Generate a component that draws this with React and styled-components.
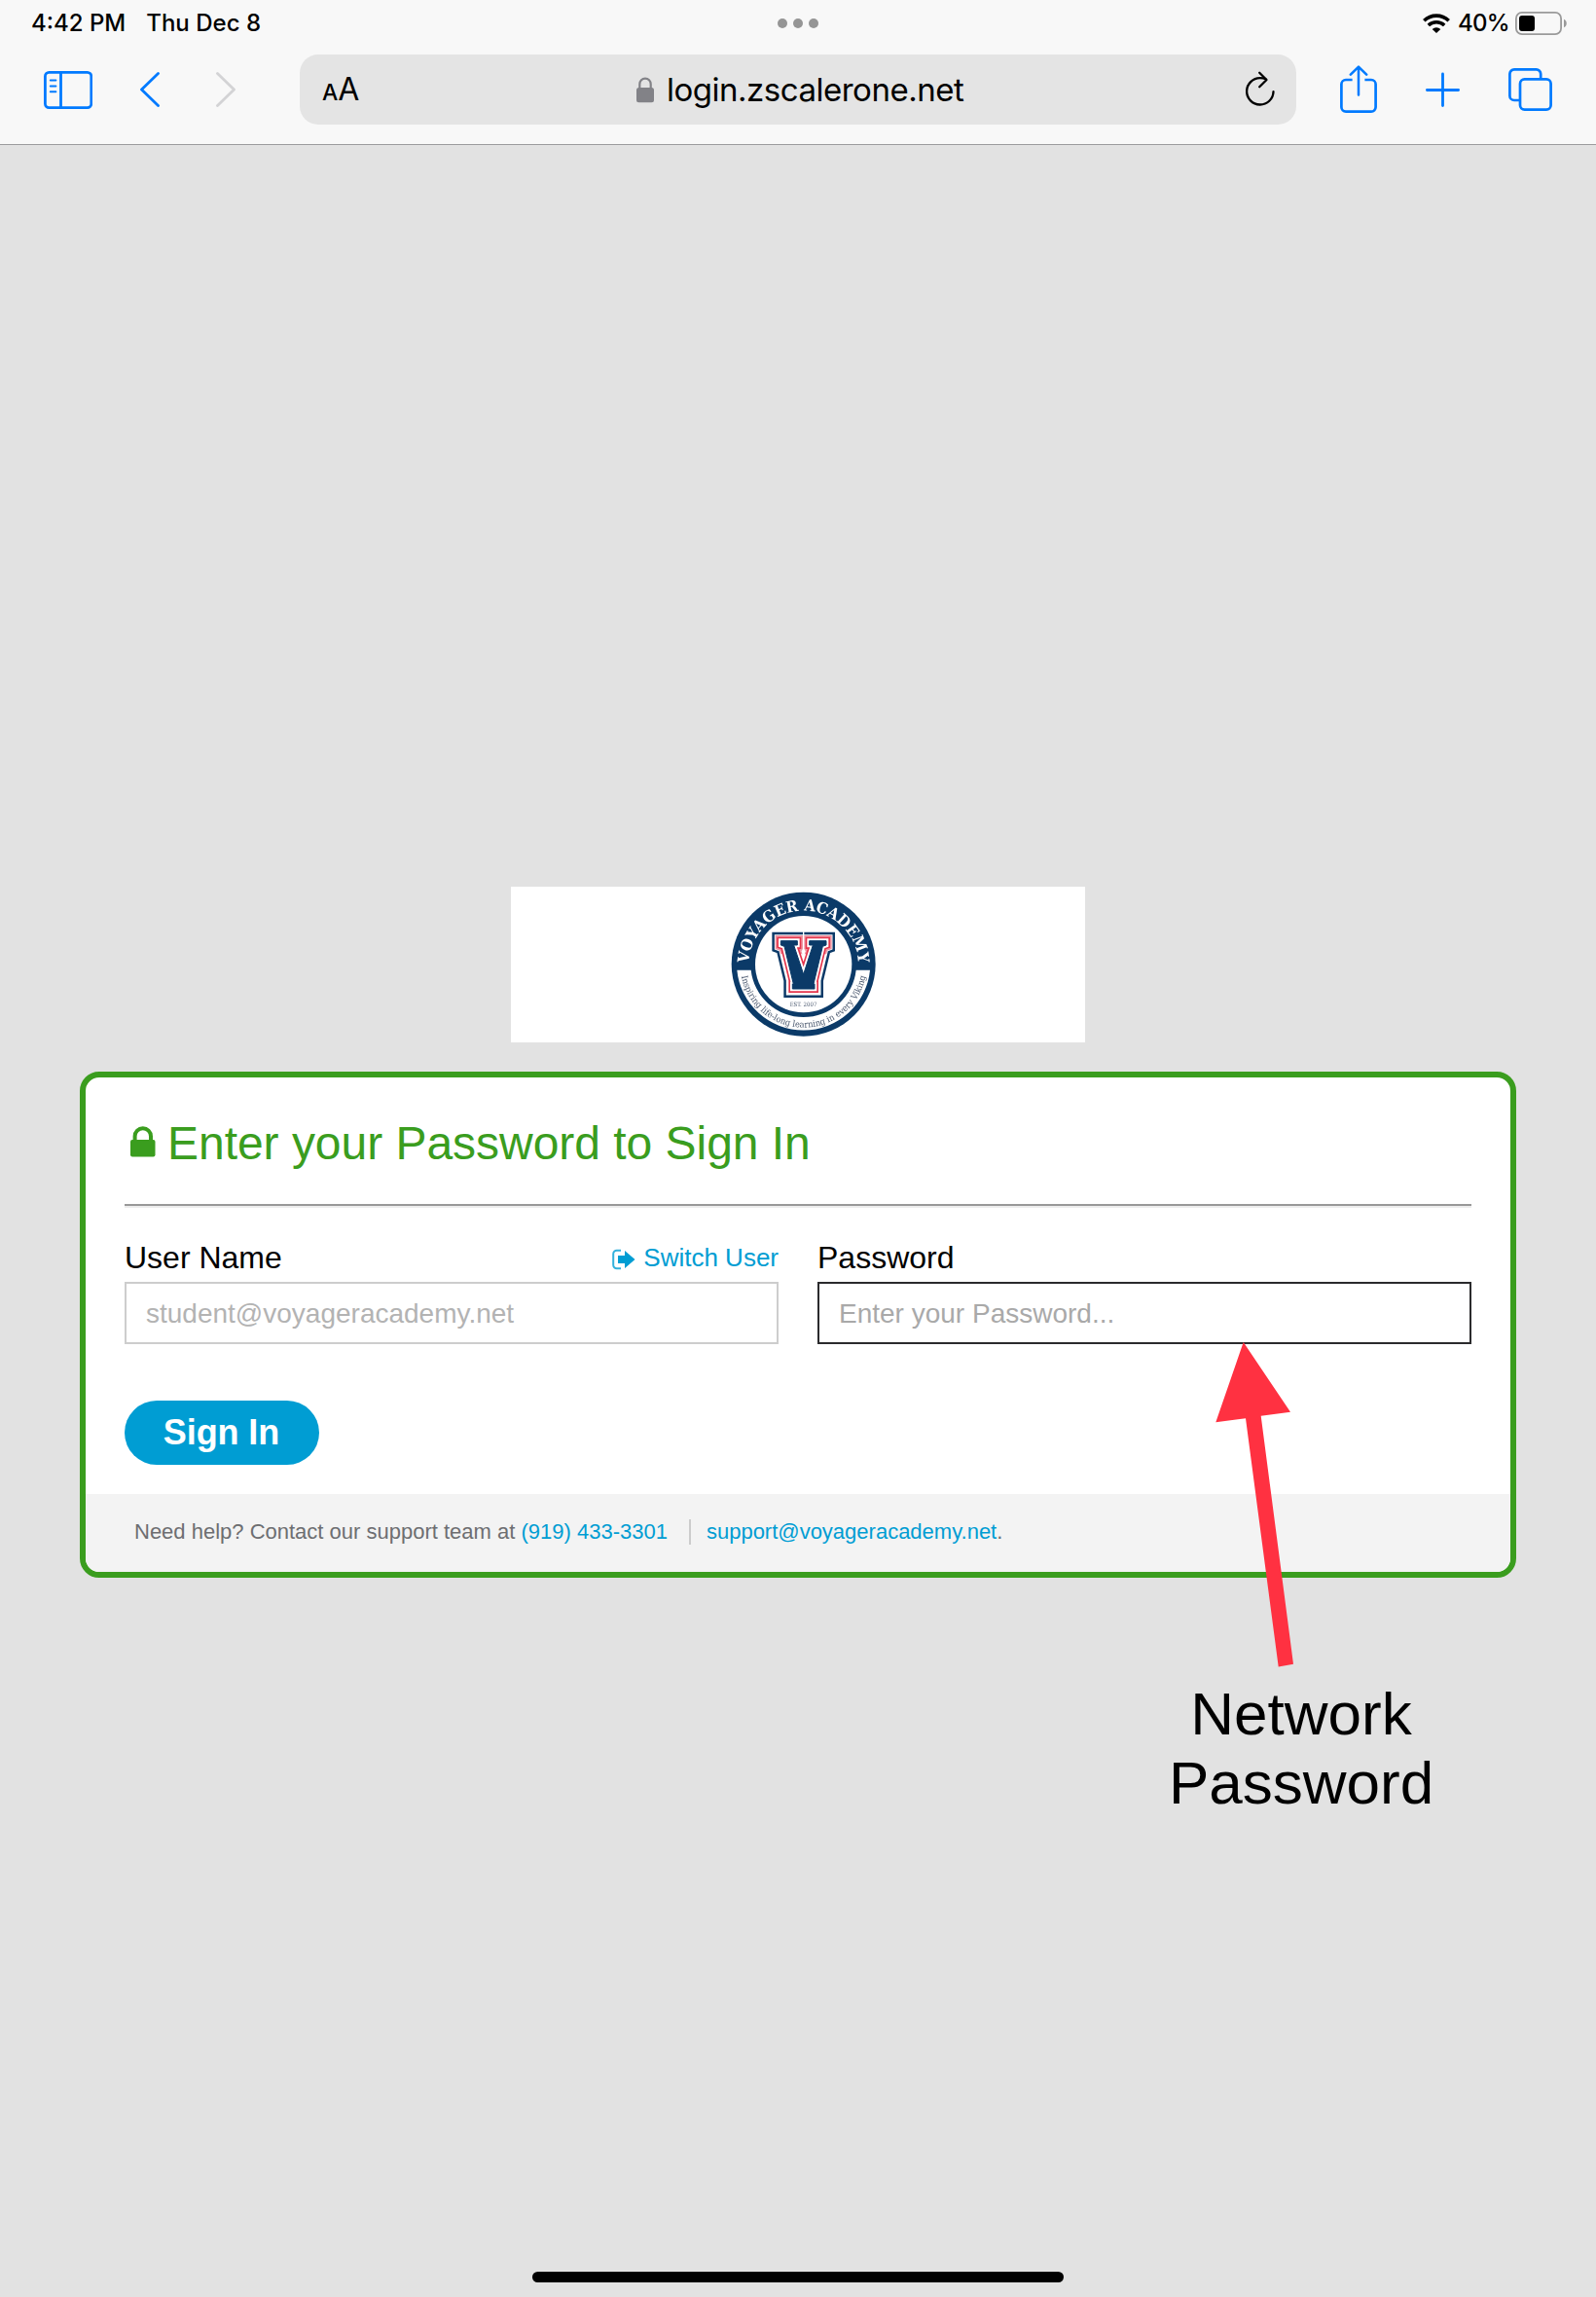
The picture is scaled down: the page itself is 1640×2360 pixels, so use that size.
import React from "react";
import styled, { createGlobalStyle } from "styled-components";

const SANS = '"Liberation Sans", Arial, Helvetica, sans-serif';
const SYSTEM = 'Inter, "Liberation Sans", sans-serif';
const GREEN = "#3a9d1e";
const BLUE = "#009dd3";
const IOS_BLUE = "#007aff";

const GlobalStyle = createGlobalStyle`
  *, *::before, *::after { box-sizing: border-box; }
  html, body { margin: 0; padding: 0; background: #e2e2e2; }
  svg { display: block; flex: none; }
`;

const Screen = styled.div`
  position: relative;
  display: flex;
  flex-direction: column;
  align-items: center;
  width: 1640px;
  height: 2360px;
  overflow: hidden;
  background: #e2e2e2;
  font-family: ${SANS};
`;

const Chrome = styled.header`
  width: 100%;
  height: 149px;
  flex: none;
  background: #f8f8f8;
  border-bottom: 1px solid #9b9b9d;
  font-family: ${SYSTEM};
  color: #000;
`;

const StatusBar = styled.div`
  display: grid;
  grid-template-columns: 1fr auto 1fr;
  align-items: center;
  height: 48px;
  padding: 0 30px;
`;

const StatusGroup = styled.div`
  display: flex;
  align-items: center;
  justify-content: ${(p) => p.$align || "flex-start"};
  padding-left: ${(p) => p.$inset || 0}px;
`;

const StatusText = styled.span`
  font-size: 24px;
  line-height: 30px;
  font-weight: 500;
  white-space: nowrap;
  letter-spacing: ${(p) => p.$spacing || "0"};
  margin-left: ${(p) => p.$left || "0"};
  margin-right: ${(p) => p.$right || "0"};
`;

const Dots = styled.div`
  display: flex;
  gap: 6px;
`;

const Dot = styled.i`
  width: 10px;
  height: 10px;
  border-radius: 50%;
  background: #959595;
`;

const Toolbar = styled.div`
  display: flex;
  align-items: center;
  height: 72px;
  margin-top: 8px;
  padding: 0 45px;
`;

const ToolButton = styled.span`
  display: flex;
  flex: none;
  margin-left: ${(p) => p.$gap || 0}px;
  color: ${(p) => (p.$disabled ? "#d3d3d5" : IOS_BLUE)};
`;

const AddressBar = styled.div`
  display: flex;
  align-items: center;
  width: 1024px;
  height: 72px;
  margin-left: 66px;
  padding: 0 22px 0 23px;
  border-radius: 19px;
  background: #e4e4e4;
`;

const TextSize = styled.span`
  width: 40px;
  flex: none;
  padding-top: 3px;
  white-space: nowrap;
  line-height: 42px;
  font-size: 32px;
  letter-spacing: -1px;
  font-weight: 400;
  small { font-size: 23px; margin-right: 1px; font-weight: 500; }
`;

const Site = styled.div`
  display: flex;
  align-items: center;
  gap: 13px;
  margin-left: 283px;
`;

const Host = styled.span`
  font-size: 33px;
  line-height: 42px;
  letter-spacing: -0.49px;
  white-space: nowrap;
`;

const Reload = styled.span`
  margin-left: auto;
`;

const Banner = styled.div`
  display: flex;
  width: 590px;
  height: 160px;
  flex: none;
  margin-top: 762px;
  padding-left: 205px;
  background: #fff;
`;

const Card = styled.main`
  width: 1476px;
  height: 520px;
  flex: none;
  margin-top: 30px;
  border: 6px solid ${GREEN};
  border-radius: 20px;
  background: #fff;
  overflow: hidden;
`;

const CardBody = styled.div`
  height: 428px;
  padding: 38px 40px 0;
`;

const Title = styled.h1`
  display: flex;
  align-items: center;
  gap: 12px;
  height: 60px;
  margin: 0;
  padding-left: 6px;
  font-size: 48px;
  line-height: 60px;
  font-weight: 400;
  letter-spacing: -0.03px;
  color: ${GREEN};
  white-space: nowrap;
  svg { margin-top: -5px; }
`;

const Rule = styled.hr`
  height: 4px;
  margin: 32px 0 31px;
  border: 0;
  border-top: 2px solid #999;
  background: #ededed;
`;

const Fields = styled.div`
  display: grid;
  grid-template-columns: 1fr 1fr;
  gap: 40px;
`;

const FieldHead = styled.div`
  display: flex;
  justify-content: space-between;
  align-items: center;
  height: 40px;
  margin-bottom: 5px;
  font-size: 32px;
  line-height: 40px;
  color: #000;
`;

const SwitchUser = styled.a`
  display: flex;
  align-items: center;
  gap: 8px;
  font-size: 26px;
  color: ${BLUE};
  svg { margin-top: 3px; }
`;

const Field = styled.div`
  height: 64px;
  padding: 1px 20px 0;
  border: 2px solid ${(p) => (p.$focused ? "#2b2b2d" : "#cdcdcd")};
  font-size: 28px;
  line-height: 60px;
  color: ${(p) => (p.$focused ? "#a9a9a9" : "#b3b3b3")};
  white-space: nowrap;
`;

const SignIn = styled.button`
  display: block;
  width: 200px;
  height: 66px;
  margin-top: 58px;
  padding: 0 1px 0 0;
  border: 0;
  border-radius: 33px;
  background: ${BLUE};
  font: bold 36px/66px ${SANS};
  letter-spacing: -0.1px;
  color: #fff;
`;

const Help = styled.footer`
  display: flex;
  align-items: center;
  height: 80px;
  padding: 0 50px 2px 50px;
  background: #f3f3f3;
  font-size: 22px;
  line-height: 26px;
  color: #6d6e71;
  white-space: pre;
`;

const HelpLink = styled.a`
  color: ${BLUE};
`;

const Separator = styled.i`
  width: 2px;
  height: 26px;
  margin: 0 16px 0 22px;
  background: #ccc;
`;

const Arrow = styled.svg`
  position: absolute;
  left: 1240px;
  top: 1370px;
`;

const Note = styled.p`
  position: absolute;
  left: 1187px;
  top: 1725px;
  width: 300px;
  margin: 0;
  font-size: 62px;
  line-height: 71px;
  text-align: center;
  color: #000;
`;

const HomeIndicator = styled.div`
  width: 546px;
  height: 11px;
  flex: none;
  margin: auto 0 15px;
  border-radius: 6px;
  background: #000;
`;

const line = { fill: "none", stroke: "currentColor", strokeLinecap: "round", strokeLinejoin: "round" };

const SidebarIcon = () => (
  <svg width="50" height="39" viewBox="0 0 50 39" {...line} strokeWidth="2.8">
    <rect x="1.4" y="1.4" width="47.4" height="36.2" rx="4" />
    <path d="M17.5 1.5V37.5" strokeLinecap="butt" />
    <path d="M6.8 9.6h5.6M6.8 15.5h5.6M6.8 21.2h5.6" strokeWidth="2" />
  </svg>
);

const ChevronIcon = ({ flip }) => (
  <svg width="20" height="36" viewBox="0 0 20 36" {...line} strokeWidth="2.8">
    <path d={flip ? "M1.5 1.5L18.5 18L1.5 34.5" : "M18.5 1.5L1.5 18L18.5 34.5"} />
  </svg>
);

const ShareIcon = () => (
  <svg width="38" height="50" viewBox="0 0 38 50" {...line} strokeWidth="2.7">
    <path d="M12.6 15H6a4.6 4.6 0 0 0-4.6 4.6v23.5a4.6 4.6 0 0 0 4.6 4.6h26a4.6 4.6 0 0 0 4.6-4.6V19.6a4.6 4.6 0 0 0-4.6-4.6h-6.6" strokeLinecap="butt" />
    <path d="M19 30.5V2M10.8 9.6L19 1.6l8.2 8" strokeWidth="2.5" />
  </svg>
);

const PlusIcon = () => (
  <svg width="35" height="36" viewBox="0 0 35 36" {...line} strokeWidth="2.8">
    <path d="M17.5 2v32.5M1.4 18.5h32.2" />
  </svg>
);

const TabsIcon = () => (
  <svg width="45" height="44" viewBox="0 0 45 44" {...line} strokeWidth="2.7">
    <rect x="12" y="11.4" width="31.6" height="31.2" rx="4.6" />
    <path d="M33.2 11V6a4.6 4.6 0 0 0-4.6-4.6H6A4.6 4.6 0 0 0 1.4 6v22.4A4.6 4.6 0 0 0 6 33h5.5" strokeLinecap="butt" />
  </svg>
);

const ReloadIcon = () => (
  <svg width="30" height="38" viewBox="0 0 30 38" {...line} strokeWidth="2.3">
    <path d="M20.5 8.2C18.9 7.4 16.900 7.100 14.800 7.100A13.700 13.700 0 1 0 28.500 21.200" />
    <path d="M14.200 1.800L21.500 9L14.200 16.200" />
  </svg>
);

const AddressLock = () => (
  <svg width="18" height="27" viewBox="0 0 18 27">
    <path d="M3.300 12V7.500a5.700 5.900 0 0 1 11.400 0V12" fill="none" stroke="#828287" strokeWidth="2.200" />
    <rect y="11" width="18" height="15.300" rx="2.500" fill="#828287" />
  </svg>
);

const WifiIcon = () => (
  <svg width="28" height="20" viewBox="0 0 28 20" fill="none" stroke="#000">
    <path d="M1.300 7.200a18.300 18.300 0 0 1 25.400 0" strokeWidth="3.600" />
    <path d="M5.800 12a11.900 11.900 0 0 1 16.400 0" strokeWidth="3.500" />
    <path d="M9.700 15.900a6.300 6.300 0 0 1 8.600 0L14 20z" fill="#000" stroke="none" />
  </svg>
);

const BatteryIcon = () => (
  <svg width="53" height="24" viewBox="0 0 53 24">
    <rect x="0.900" y="0.900" width="46.200" height="22.200" rx="6" fill="none" stroke="#9a9a9a" strokeWidth="1.800" />
    <rect x="4" y="4" width="16" height="16" rx="3" />
    <path d="M50 7.700c3.700 1.600 3.700 7 0 8.600z" fill="#9a9a9a" />
  </svg>
);

const TitleLock = () => (
  <svg width="26" height="32" viewBox="0 0 26 32">
    <path d="M4.600 15V10.500a8.200 8.200 0 0 1 16.400 0V15" fill="none" stroke={GREEN} strokeWidth="4" />
    <rect x="0" y="14" width="25.500" height="17.500" rx="2" fill={GREEN} />
  </svg>
);

const SwitchIcon = () => (
  <svg width="24" height="22" viewBox="0 0 24 22">
    <path d="M9 1.700H4.800A3.600 3.600 0 0 0 1.200 5.300V16.700A3.600 3.600 0 0 0 4.800 20.300H9" fill="none" stroke={BLUE} strokeWidth="2" opacity="0.8" />
    <path d="M6 7h7V2l10.500 9L13 20v-5H6z" fill={BLUE} />
  </svg>
);

const NAVY = "#0b3a68";
const V = "M217 200H268V213H257L287 303L316 213H305V200H357V213L346 217L318 333H321V348H253V333H256L228 217L217 213Z";

const Crest = () => (
  <svg width="190" height="160" viewBox="0 33 570 480" style={{ filter: "blur(0.35px)" }}>
    <defs>
      <path id="crest-top" d="M118 276A169 169 0 0 1 456 276" />
      <path id="crest-base" d="M92 272A195 195 0 0 0 482 272" />
      <clipPath id="crest-serifs"><rect x="180" y="165" width="214" height="76" /></clipPath>
    </defs>
    <circle cx="287" cy="272" r="222" fill={NAVY} />
    <path d="M82 290A206 206 0 0 0 492 290H449A163 163 0 0 1 125 290Z" fill="#fff" />
    <circle cx="287" cy="272" r="149" fill="#fff" />
    <g fontFamily='"DejaVu Serif", serif' fill="#fff">
      <text fontSize="48" fontWeight="bold">
        <textPath href="#crest-top" startOffset="7" textLength="517" lengthAdjust="spacingAndGlyphs">VOYAGER ACADEMY</textPath>
      </text>
      <text fontSize="27" fill="#4c5a70">
        <textPath href="#crest-base" startOffset="37" textLength="538" lengthAdjust="spacingAndGlyphs">Inspiring life-long learning in every Viking</textPath>
      </text>
      <text x="245" y="402" fontSize="18" fill="#4c5a70" textLength="83" lengthAdjust="spacingAndGlyphs">EST. 2007</text>
    </g>
    <g strokeLinejoin="miter" strokeMiterlimit="3">
      <path d={V} fill={NAVY} stroke={NAVY} strokeWidth="54" />
      <path d={V} fill="none" stroke="#fff" strokeWidth="39" />
      <path d={V} fill="none" stroke="#ee95a2" strokeWidth="34" clipPath="url(#crest-serifs)" />
      <path d={V} fill="none" stroke="#e5354c" strokeWidth="24" />
      <path d={V} fill="none" stroke="#fff" strokeWidth="14" />
      <path d={V} fill={NAVY} stroke={NAVY} strokeWidth="3" />
      <path d="M287 172V222" stroke="#fff" strokeWidth="4" />
      <path d="M287 219l6 14-6 14-6-14z" fill="#fff" />
    </g>
  </svg>
);

export default function App() {
  return (
    <Screen>
      <GlobalStyle />
      <Chrome>
        <StatusBar>
          <StatusGroup $inset={2}>
            <StatusText>4:42 PM</StatusText>
            <StatusText $left="21px">Thu Dec 8</StatusText>
          </StatusGroup>
          <Dots><Dot /><Dot /><Dot /></Dots>
          <StatusGroup $align="flex-end">
            <WifiIcon />
            <StatusText $left="8px" $right="6px" $spacing="-0.7px">40%</StatusText>
            <BatteryIcon />
          </StatusGroup>
        </StatusBar>
        <Toolbar>
          <ToolButton><SidebarIcon /></ToolButton>
          <ToolButton $gap={49}><ChevronIcon /></ToolButton>
          <ToolButton $gap={58} $disabled><ChevronIcon flip /></ToolButton>
          <AddressBar>
            <TextSize><small>A</small>A</TextSize>
            <Site>
              <AddressLock />
              <Host>login.zscalerone.net</Host>
            </Site>
            <Reload><ReloadIcon /></Reload>
          </AddressBar>
          <ToolButton $gap={45}><ShareIcon /></ToolButton>
          <ToolButton $gap={50}><PlusIcon /></ToolButton>
          <ToolButton $gap={50}><TabsIcon /></ToolButton>
        </Toolbar>
      </Chrome>

      <Banner><Crest /></Banner>

      <Card>
        <CardBody>
          <Title><TitleLock />Enter your Password to Sign In</Title>
          <Rule />
          <Fields>
            <div>
              <FieldHead>
                User Name
                <SwitchUser><SwitchIcon />Switch User</SwitchUser>
              </FieldHead>
              <Field>student@voyageracademy.net</Field>
            </div>
            <div>
              <FieldHead>Password</FieldHead>
              <Field $focused>Enter your Password...</Field>
            </div>
          </Fields>
          <SignIn>Sign In</SignIn>
        </CardBody>
        <Help>
          <span>Need help? Contact our support team at </span>
          <HelpLink>(919) 433-3301</HelpLink>
          <Separator />
          <HelpLink>support@voyageracademy.net</HelpLink>
          <span>.</span>
        </Help>
      </Card>

      <Arrow width="100" height="350" viewBox="1240 1370 100 350">
        <path d="M1277.700 1379L1326 1450.800L1295.700 1454.700L1329 1709.800L1313.700 1712.600L1280 1457.200L1249.300 1461.200Z" fill="#ff3141" />
      </Arrow>
      <Note>Network<br />Password</Note>

      <HomeIndicator />
    </Screen>
  );
}
